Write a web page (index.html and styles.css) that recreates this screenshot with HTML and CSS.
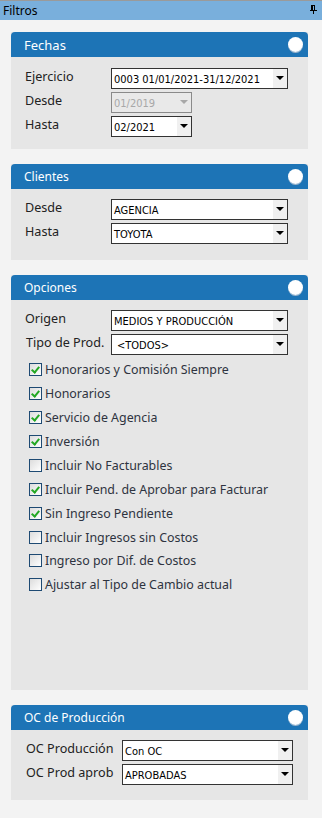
FILE: index.html
```html
<!DOCTYPE html>
<html lang="es">
<head>
    <meta charset="UTF-8">
    <meta name="viewport" content="width=device-width, initial-scale=1.0">
    <title>Filtros</title>
    <link rel="stylesheet" href="styles.css">
</head>
<body>
    <div class="titlebar">
        <span>Filtros</span>
        <svg class="pin" width="7" height="9" viewBox="0 0 7 9">
            <rect x="1" y="0" width="4" height="1" fill="#000"/>
            <rect x="1" y="0" width="2" height="5" fill="#000"/>
            <rect x="4" y="0" width="1" height="5" fill="#000"/>
            <rect x="0" y="5" width="7" height="1" fill="#000"/>
            <rect x="3" y="6" width="1" height="3" fill="#000"/>
        </svg>
    </div>

    <div class="content">
        <div class="panel">
            <div class="panel-head">
                <span class="panel-title big">Fechas</span>
                <span class="knob"></span>
            </div>
            <div class="panel-body fechas">
                <div class="row">
                    <label>Ejercicio</label>
                    <div class="combo wide"><span class="val">0003 01/01/2021-31/12/2021</span><span class="arrow"></span></div>
                </div>
                <div class="row">
                    <label>Desde</label>
                    <div class="combo short disabled"><span class="val">01/2019</span><span class="arrow"></span></div>
                </div>
                <div class="row">
                    <label>Hasta</label>
                    <div class="combo short"><span class="val">02/2021</span><span class="arrow"></span></div>
                </div>
            </div>
        </div>

        <div class="panel">
            <div class="panel-head">
                <span class="panel-title">Clientes</span>
                <span class="knob"></span>
            </div>
            <div class="panel-body clientes">
                <div class="row">
                    <label>Desde</label>
                    <div class="combo wide"><span class="val">AGENCIA</span><span class="arrow"></span></div>
                </div>
                <div class="row">
                    <label>Hasta</label>
                    <div class="combo wide"><span class="val">TOYOTA</span><span class="arrow"></span></div>
                </div>
            </div>
        </div>

        <div class="panel">
            <div class="panel-head">
                <span class="panel-title">Opciones</span>
                <span class="knob"></span>
            </div>
            <div class="panel-body opciones">
                <div class="row">
                    <label>Origen</label>
                    <div class="combo wide"><span class="val">MEDIOS Y PRODUCCIÓN</span><span class="arrow"></span></div>
                </div>
                <div class="row">
                    <label class="tipo">Tipo de Prod.</label>
                    <div class="combo wide"><span class="val pad">&lt;TODOS&gt;</span><span class="arrow"></span></div>
                </div>
                <ul class="checks">
                    <li><span class="box on"></span>Honorarios y Comisión Siempre</li>
                    <li><span class="box on"></span>Honorarios</li>
                    <li><span class="box on"></span>Servicio de Agencia</li>
                    <li><span class="box on"></span>Inversión</li>
                    <li><span class="box"></span>Incluir No Facturables</li>
                    <li><span class="box on"></span>Incluir Pend. de Aprobar para Facturar</li>
                    <li><span class="box on"></span>Sin Ingreso Pendiente</li>
                    <li><span class="box"></span>Incluir Ingresos sin Costos</li>
                    <li class="tight"><span class="box"></span>Ingreso por Dif. de Costos</li>
                    <li class="loose"><span class="box"></span>Ajustar al Tipo de Cambio actual</li>
                </ul>
            </div>
        </div>

        <div class="panel">
            <div class="panel-head">
                <span class="panel-title">OC de Producción</span>
                <span class="knob"></span>
            </div>
            <div class="panel-body oc">
                <div class="row">
                    <label>OC Producción</label>
                    <div class="combo oc-combo"><span class="val">Con OC</span><span class="arrow"></span></div>
                </div>
                <div class="row">
                    <label>OC Prod aprob</label>
                    <div class="combo oc-combo"><span class="val">APROBADAS</span><span class="arrow"></span></div>
                </div>
            </div>
        </div>
    </div>
</body>
</html>
```

FILE: styles.css
```css
body {
    margin: 0;
    background: #f3f3f3;
    font-family: 'Noto Sans', 'DejaVu Sans', sans-serif;
    color: #222;
    width: 322px;
    height: 818px;
    overflow: hidden;
}
.titlebar {
    height: 19px;
    border-top: 1px solid #9a9a9a;
    background: #79afdc;
    display: flex;
    align-items: center;
    justify-content: space-between;
    padding: 0 5px 0 3px;
    font-size: 12px;
    color: #000;
}
.pin { margin-top: -3px; }
.content {
    padding: 12px 14px 0 11px;
    display: flex;
    flex-direction: column;
    gap: 15px;
}
.panel { background: #e6e6e6; }
.panel-head {
    height: 25px;
    background: #1d74b6;
    border-radius: 4px 4px 0 0;
    display: flex;
    align-items: center;
    justify-content: space-between;
    padding: 0 5px 0 13px;
}
.panel-title { color: #fff; font-size: 12px; }
.panel-title.big { font-size: 13px; }
.knob {
    width: 15px;
    height: 15px;
    border-radius: 50%;
    background: radial-gradient(circle at 45% 40%, #fff 60%, #e4e8ee 100%);
    box-shadow: 0 1px 0 #9fb6cc;
}
.panel-body { padding: 10px 0 0 14px; }
.fechas { height: 82px; }
.clientes { height: 62px; padding-top: 9px; }
.opciones { height: 381px; padding-top: 9px; }
.oc { height: 61px; padding-top: 9px; }
.row {
    display: flex;
    align-items: center;
    height: 22px;
    margin-bottom: 2px;
}
.row label {
    width: 86px;
    font-size: 12.6px;
    margin-top: -4px;
    color: #222;
}
.row label.tipo { margin-left: 1px; width: 85px; }
.oc .row label { width: 96px; margin-left: 1px; }
.combo {
    height: 19px;
    border: 1px solid #333;
    background: #fff;
    display: flex;
    align-items: center;
    justify-content: space-between;
    font-family: 'DejaVu Sans Condensed', 'DejaVu Sans', sans-serif;
    font-size: 11px;
    color: #000;
    box-sizing: content-box;
}
.combo.wide { width: 175px; }
.combo.short { width: 79px; }
.combo.oc-combo { width: 169px; }
.val { padding-left: 2px; padding-top: 2px; }
.val.pad { padding-left: 5px; }
.arrow {
    width: 14px;
    height: 19px;
    background: #f0f0f0;
    position: relative;
}
.arrow::after {
    content: "";
    position: absolute;
    left: 3px;
    top: 7px;
    border-left: 4px solid transparent;
    border-right: 4px solid transparent;
    border-top: 4px solid #000;
}
.combo.disabled {
    background: #e9e9e9;
    border-color: #8a8a8a;
    color: #a8a8a8;
}
.combo.disabled .arrow { background: transparent; }
.combo.disabled .arrow::after { border-top-color: #a8a8a8; }
.checks {
    list-style: none;
    margin: 8px 0 0 0;
    padding: 0 0 0 4px;
}
.checks li {
    display: flex;
    align-items: center;
    height: 13px;
    margin-bottom: 11px;
    font-size: 12.4px;
    color: #2e3340;
}
.checks li.tight { margin-top: -1px; }
.checks li.loose { margin-top: 1px; }
.box {
    width: 11px;
    height: 11px;
    border: 1px solid #1e4a73;
    background: linear-gradient(135deg, #dcdcdc, #fff);
    margin-right: 3px;
    position: relative;
    flex: none;
}
.box.on::after {
    content: "";
    position: absolute;
    left: 3px;
    top: 1px;
    width: 3px;
    height: 6px;
    border-right: 2px solid #24a824;
    border-bottom: 2px solid #24a824;
    transform: rotate(40deg);
}
```
